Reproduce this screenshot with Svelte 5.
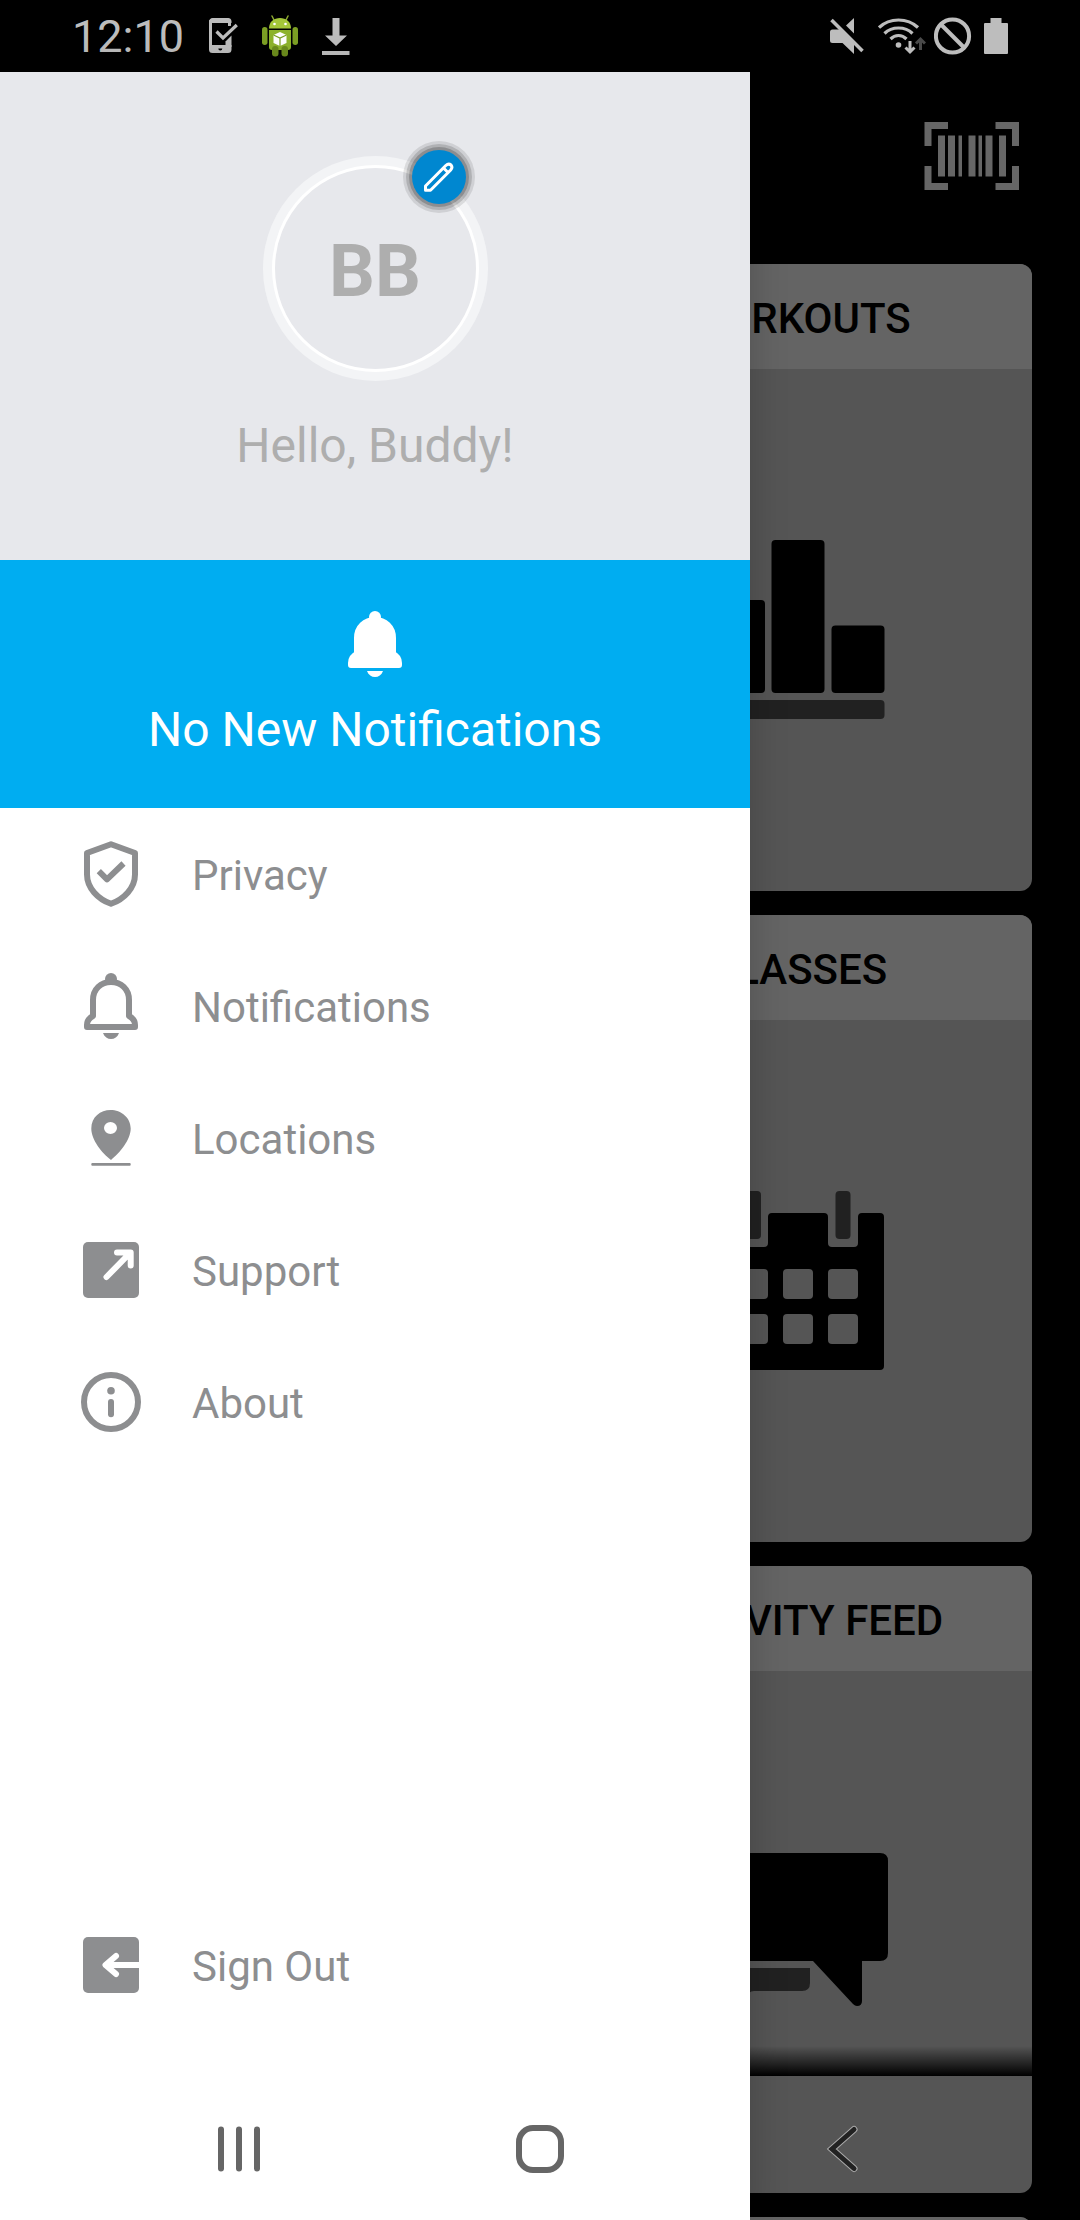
<script>
  const tiles = [
    { title: 'WORKOUTS', icon: 'chart' },
    { title: 'CLASSES', icon: 'calendar' },
    { title: 'ACTIVITY FEED', icon: 'chat' },
    { title: '', icon: '' }
  ];

  const links = [
    { label: 'Privacy', icon: 'shield' },
    { label: 'Notifications', icon: 'bell' },
    { label: 'Locations', icon: 'pin' },
    { label: 'Support', icon: 'external' },
    { label: 'About', icon: 'info' }
  ];

  const bellPath = 'M12 27C12 16 20 9 30 9s18 7 18 18v16c4 2 6 5 6 9v2H6v-2c0-4 2-7 6-9z';
</script>

{#snippet menuIcon(name)}
  <svg class="menu-icon" width="60" height="66" viewBox="0 0 60 66" aria-hidden="true">
    {#if name === 'shield'}
      <path class="line" d="M30 3.2L54 12v21.500C54 47 43 58 30 62.800C17 58 6 47 6 33.500V12z" />
      <path class="line" stroke-linejoin="miter" d="M17.800 30.200L26 38.300l16.500-15.800" />
    {:else if name === 'bell'}
      <path class="line" d={bellPath} />
      <circle cx="30" cy="6" r="6" />
      <path d="M22 60h16c-1.500 4-4.500 6-8 6s-6.500-2-8-6z" />
    {:else if name === 'pin'}
      <path
        fill-rule="evenodd"
        d="M29.500 5C40 5 49.700 12.500 49.700 23.500C49.700 35 38.500 48 30 55C21 48 10.300 35 10.300 23.500C10.300 12 19.500 5 29.500 5zM29.500 17a6.500 6 0 1 0 0 12a6.500 6 0 1 0 0-12z"
      />
      <rect x="10.300" y="58" width="39.400" height="2.700" rx="1" />
    {:else if name === 'external'}
      <rect x="2" y="5" width="56" height="56" rx="5" />
      <path class="cut" d="M25.500 40L49 16M36 15.500h13.700v13" />
    {:else if name === 'info'}
      <circle class="line" cx="30" cy="33" r="27" />
      <circle cx="30" cy="21.700" r="3.800" />
      <path class="line round" d="M30 33v12.300" />
    {:else if name === 'signout'}
      <rect x="2" y="5" width="56" height="56" rx="5" />
      <path class="cut" d="M35 24l-10.500 9L35 42" />
      <path class="cut flat" d="M26 33h33" />
    {/if}
  </svg>
{/snippet}

<div class="screen">
  <header class="status">
    <div class="status-left">
      <span class="time">12:10</span>
      <svg width="30" height="38" viewBox="0 0 30 38" aria-hidden="true">
        <path
          fill="none"
          stroke="currentColor"
          stroke-width="3"
          d="M21.500 9V6q0-3.500-3.500-3.500H6Q2.500 2.500 2.500 6v24h19v-8"
        />
        <path
          fill="currentColor"
          fill-rule="evenodd"
          d="M1 28h22.500v4.500q0 3.500-3.500 3.500H4.500Q1 36 1 32.500zM12.300 29.500a2 2 0 1 0 0 4a2 2 0 1 0 0-4zM1 3.500Q2 1 5 1h15q3 0 3.500 3v2H1z"
        />
        <path fill="currentColor" d="M17.500 24.500l6-6V30h-6z" />
        <path fill="none" stroke="#000" stroke-width="5" d="M18 17.500L27 8" />
        <path fill="none" stroke="currentColor" stroke-width="3.200" d="M8.500 14.500l6.500 6.500L28.800 8" />
      </svg>
      <svg width="36" height="42" viewBox="0 0 36 42" aria-hidden="true">
        <path fill="none" stroke="#8aa62f" stroke-width="1.500" stroke-linecap="round" d="M12 5l-2-4M24 5l2-4" />
        <path fill="#a4c639" d="M7 13.500C7 6.500 12 3 18 3s11 3.500 11 10.500z" />
        <path fill="#8db32c" d="M7 15h22v17q0 3-3 3H10q-3 0-3-3z" />
        <rect x="0" y="12" width="5.500" height="18" rx="2.700" fill="#7c9f24" />
        <rect x="30.500" y="12" width="5.500" height="18" rx="2.700" fill="#7c9f24" />
        <rect x="10" y="31" width="6.500" height="10.500" rx="3" fill="#6c8c1d" />
        <rect x="19.500" y="31" width="6.500" height="10.500" rx="3" fill="#6c8c1d" />
        <circle cx="12.500" cy="9" r="1.300" fill="#fff" />
        <circle cx="23.500" cy="9" r="1.300" fill="#fff" />
        <path fill="#fff" d="M18 17l6.500 3v8L18 31l-6.500-3v-8z" />
        <path fill="none" stroke="#7c9f24" stroke-width="1.200" d="M11.500 20l6.500 3l6.500-3M18 23V31" />
      </svg>
      <svg width="28" height="38" viewBox="0 0 28 38" aria-hidden="true">
        <path fill="currentColor" d="M10.500 1h7v17.500h7.500L14 29 3 18.500h7.500zM0 34h27.500v4H0z" />
      </svg>
    </div>
    <div class="status-right">
      <svg width="40" height="38" viewBox="0 0 40 38" aria-hidden="true">
        <path fill="currentColor" d="M2.500 12.500H10L24 26.500V37L12.500 26H2.500Q0 26 0 23.500V15q0-2.500 2.500-2.500zM24 1v15.500L16 8.500z" />
        <path stroke="#000" stroke-width="3" d="M4 1l30 30" />
        <path stroke="currentColor" stroke-width="3.500" d="M1.500 3l31 31" />
      </svg>
      <svg width="48" height="38" viewBox="0 0 48 38" aria-hidden="true">
        <g fill="none" stroke="currentColor" stroke-width="3.200">
          <path d="M1 10.500Q9 3 20.500 3T40 10.500" />
          <path d="M6.500 16.500Q12 11 20.500 11T34.500 16.500" />
          <path d="M12.500 22q3.500-3.500 8-3.500t8 3.500" />
        </g>
        <circle cx="20.500" cy="28" r="2.800" fill="currentColor" />
        <path fill="none" stroke="currentColor" stroke-width="3" d="M32 24v10.500M27.500 30.500l4.500 4.500 4.500-4.500" />
        <path fill="none" stroke="#4a4a4a" stroke-width="3" d="M42.500 33V22.500M38 26.500l4.500-4.500 4.500 4.500" />
      </svg>
      <svg width="38" height="38" viewBox="0 0 38 38" aria-hidden="true">
        <g fill="none" stroke="currentColor" stroke-width="4">
          <circle cx="18.500" cy="19" r="16.600" />
          <path d="M7 7.500l23 23" />
        </g>
      </svg>
      <svg width="28" height="38" viewBox="0 0 28 38" aria-hidden="true">
        <path fill="currentColor" d="M10.500 1h11v5H27q1 0 1 1v29q0 1-1 1H5q-1 0-1-1V7q0-1 1-1h5.500z" />
      </svg>
    </div>
  </header>

  <main class="home">
    <div class="toolbar">
      <button class="scan" aria-label="Scan barcode">
        <svg width="96" height="68" viewBox="0 0 96 68" aria-hidden="true">
          <path fill="none" stroke="currentColor" stroke-width="7" d="M24 3.500H4V24M71.500 3.500h20V24M24 64.500H4V44M71.500 64.500h20V44" />
          <path
            fill="currentColor"
            d="M14 13.500h7v41h-7zM24 13.500h7v41h-7zM34.500 13.500h3.500v41h-3.500zM44.500 13.500h7v41h-7zM54.500 13.500h3.500v41h-3.500zM61.500 13.500h7v41h-7zM75 13.500h7v41h-7z"
          />
        </svg>
      </button>
    </div>

    <div class="tiles">
      {#each tiles as tile}
        <article class="tile">
          <h2>{tile.title}</h2>
          <div class="tile-body">
            <svg width="180" height="180" viewBox="0 0 180 180" aria-hidden="true">
              {#if tile.icon === 'chart'}
                <rect x="3" y="60" width="54" height="93" rx="4" />
                <rect x="63.500" y="0" width="53" height="153" rx="4" />
                <rect x="123.500" y="85.500" width="53" height="67.500" rx="4" />
                <rect class="soft" x="3" y="160" width="173.500" height="19" rx="4" />
              {:else if tile.icon === 'calendar'}
                <path
                  fill-rule="evenodd"
                  d="M6 22h20q4 0 4 4v26q0 4 4 4h22q4 0 4-4V26q0-4 4-4h52q4 0 4 4v26q0 4 4 4h22q4 0 4-4V26q0-4 4-4h18q4 0 4 4v149q0 4-4 4H7q-4 0-4-4V26q0-4 4-4z"
                />
                <rect class="soft" x="38" y="0" width="15" height="48" rx="4" />
                <rect class="soft" x="127.500" y="0" width="15" height="48" rx="4" />
                {#each [78, 123] as y}
                  {#each [30, 75, 120] as x}
                    <rect class="hole" {x} {y} width="30" height="30" rx="4" />
                  {/each}
                {/each}
              {:else if tile.icon === 'chat'}
                <path d="M28 11h144q8 0 8 8v92q0 8-8 8h-18v40q0 5-5 5-2 0-4-2L105 119H28q-8 0-8-8V19q0-8 8-8z" />
                <path class="soft" d="M8 126h94v15q0 8-8 8H46q-3 0-5 2L20 172V149H8z" />
              {/if}
            </svg>
          </div>
        </article>
      {/each}
    </div>
  </main>

  <div class="fade"></div>

  <aside class="drawer">
    <section class="profile">
      <div class="avatar">
        <div class="ring">BB</div>
        <button class="edit" aria-label="Edit profile">
          <svg width="30" height="30" viewBox="0 0 30 30" aria-hidden="true">
            <path d="M1.500 28.300V24L21.800 3.500q2.700-2.500 5.200-.500q2 2.500-.300 5L6.500 28.300zM19.500 6l4.800 4.800" />
          </svg>
        </button>
      </div>
      <p class="hello">Hello, Buddy!</p>
    </section>

    <button class="banner">
      <svg class="banner-bell" width="60" height="66" viewBox="0 0 60 66" aria-hidden="true">
        <path d={bellPath} stroke="currentColor" stroke-width="6" stroke-linejoin="round" />
        <circle cx="30" cy="6" r="6" />
        <path d="M22 60h16c-1.500 4-4.500 6-8 6s-6.500-2-8-6z" />
      </svg>
      <span>No New Notifications</span>
    </button>

    <nav class="menu">
      {#each links as link}
        <a class="row" href="#{link.icon}">
          {@render menuIcon(link.icon)}
          <span>{link.label}</span>
        </a>
      {/each}
      <a class="row signout" href="#signout">
        {@render menuIcon('signout')}
        <span>Sign Out</span>
      </a>
    </nav>
  </aside>

  <!-- System buttons float above both the home page and the drawer -->
  <div class="softkeys">
    <button aria-label="Recent apps">
      <svg width="48" height="48" viewBox="0 0 48 48" aria-hidden="true">
        <path stroke="#666" stroke-width="6" stroke-linecap="round" d="M7 4.500v39M25 4.500v39M43 4.500v39" />
      </svg>
    </button>
    <button aria-label="Home">
      <svg width="48" height="48" viewBox="0 0 48 48" aria-hidden="true">
        <rect x="3" y="3" width="42" height="42" rx="14" fill="none" stroke="#666" stroke-width="6" />
      </svg>
    </button>
    <button aria-label="Back">
      <svg width="48" height="48" viewBox="0 0 48 48" aria-hidden="true">
        <path class="back-edge" d="M36 4.500L14 24l22 19.500" />
        <path class="back" d="M36 4.500L14 24l22 19.500" />
      </svg>
    </button>
  </div>
</div>

<style>
  :global(body) {
    background: #000;
  }

  .screen {
    display: grid;
    grid-template-columns: minmax(0, 1fr);
    grid-template-rows: 72px minmax(0, 1fr);
    height: 100vh;
    overflow: hidden;
    background: #000;
    font-family: Roboto, "Liberation Sans", sans-serif;
  }

  button {
    border: 0;
    padding: 0;
    background: none;
    font: inherit;
    cursor: pointer;
  }

  svg {
    display: block;
    fill: currentColor;
  }

  /* Status bar */
  .status {
    display: flex;
    align-items: center;
    justify-content: space-between;
    padding: 0 72px;
    color: #bdbdbd;
  }

  .status-left,
  .status-right {
    display: flex;
    align-items: center;
  }
  .status-left { gap: 24px; }
  .status-right { gap: 8px; }

  .time {
    padding-top: 2px;
    font-size: 45px;
    line-height: 54px;
  }

  /* Everything under the status bar shares one cell */
  .home,
  .fade,
  .drawer,
  .softkeys {
    grid-column: 1;
    grid-row: 2;
  }

  .home {
    overflow: hidden;
  }

  .toolbar {
    display: flex;
    justify-content: flex-end;
    padding: 50px 60px 74px;
  }

  .scan { color: #666; }

  .tiles {
    display: grid;
    grid-template-columns: 1fr 1fr;
    gap: 24px 48px;
    padding: 0 48px;
  }

  .tile {
    grid-column: 2;
    border-radius: 12px;
    overflow: hidden;
    background: #555;
    color: #000;
  }

  .tile h2 {
    height: 105px;
    margin: 0;
    background: #646464;
    font-size: 42px;
    font-weight: 500;
    line-height: 110px;
    text-align: center;
    white-space: nowrap;
  }

  .tile-body {
    display: flex;
    align-items: center;
    justify-content: center;
    height: 522px;
  }

  .soft { fill: #212121; }
  .hole { fill: #555; }

  .fade {
    align-self: end;
    height: 30px;
    margin-bottom: 144px;
    background: linear-gradient(transparent, #000);
  }

  /* Drawer */
  .drawer {
    display: flex;
    flex-direction: column;
    width: min(750px, 84%);
    background: #fff;
    box-shadow: 0 0 36px rgba(0, 0, 0, 0.2);
    z-index: 1;
  }

  .profile {
    display: flex;
    flex-direction: column;
    align-items: center;
    gap: 35px;
    padding: 84px 0;
    background: #e7e8ec;
    color: #aeaeae;
  }

  .avatar {
    position: relative;
    padding: 9px;
    border-radius: 50%;
    background: #f3f4f6;
  }

  .ring {
    box-sizing: border-box;
    width: 207px;
    height: 207px;
    border: 3px solid #fff;
    border-radius: 50%;
    background: #e7e8ec;
    font-size: 72px;
    font-weight: 700;
    line-height: 208px;
    text-align: center;
  }

  .edit {
    position: absolute;
    top: -6px;
    right: 22px;
    display: flex;
    align-items: center;
    justify-content: center;
    width: 54px;
    height: 54px;
    border-radius: 50%;
    background: #0087d0;
    box-shadow:
      0 0 0 3px rgba(0, 0, 0, 0.2),
      0 0 0 6px rgba(0, 0, 0, 0.15),
      0 0 0 9px rgba(0, 0, 0, 0.1);
  }

  .edit path {
    fill: none;
    stroke: #fff;
    stroke-width: 3;
    stroke-linejoin: round;
  }

  .hello {
    margin: 0;
    font-size: 48px;
    line-height: 60px;
  }

  .banner {
    display: flex;
    flex-direction: column;
    align-items: center;
    gap: 23px;
    padding: 51px 0 48px;
    background: #00adf1;
    color: #fff;
    font-size: 48px;
    line-height: 60px;
  }

  .menu {
    display: flex;
    flex: 1;
    flex-direction: column;
    padding-bottom: 189px;
  }

  .row {
    display: flex;
    align-items: center;
    gap: 51px;
    height: 132px;
    padding-left: 81px;
    color: #8d8e90;
    font-size: 42px;
    line-height: 54px;
    text-decoration: none;
  }

  .row span { padding-top: 3px; }

  .signout { margin-top: auto; }

  .line {
    fill: none;
    stroke: currentColor;
    stroke-width: 6;
    stroke-linejoin: round;
  }
  .round { stroke-linecap: round; }

  .cut {
    fill: none;
    stroke: #fff;
    stroke-width: 6;
    stroke-linecap: round;
    stroke-linejoin: round;
  }
  .flat { stroke-linecap: butt; }

  /* System buttons */
  .softkeys {
    display: grid;
    grid-template-columns: repeat(3, 1fr);
    align-items: center;
    align-self: end;
    box-sizing: border-box;
    height: 144px;
    padding: 2px 87px 0;
    z-index: 2;
  }

  .softkeys button {
    display: flex;
    align-items: center;
    justify-content: center;
    height: 100%;
  }

  .back,
  .back-edge {
    fill: none;
    stroke-linecap: round;
  }
  .back { stroke: #222; stroke-width: 5; }
  .back-edge { stroke: #aaa; stroke-width: 7; }
</style>
